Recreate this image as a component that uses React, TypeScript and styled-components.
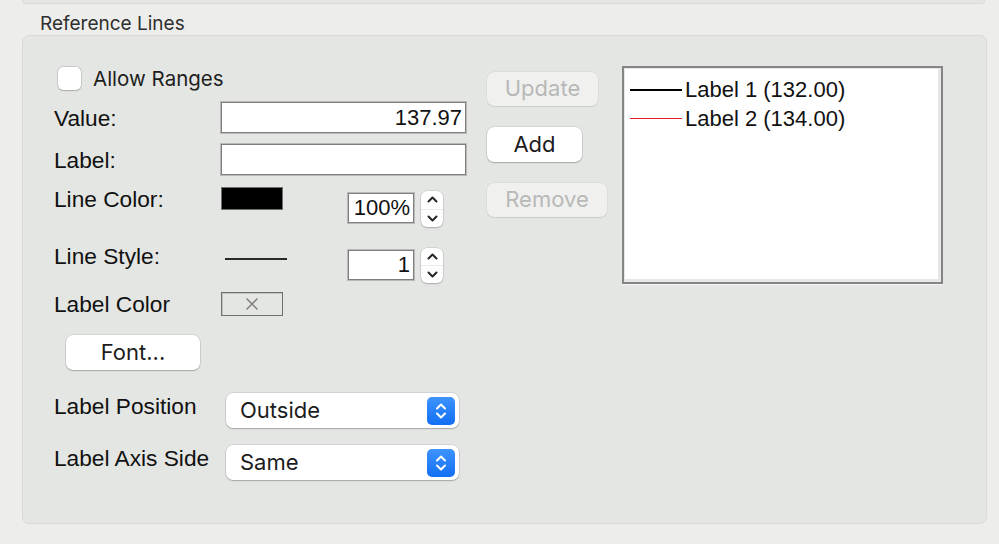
import React from "react";
import styled, { createGlobalStyle } from "styled-components";

const GlobalStyle = createGlobalStyle`
  html, body { margin: 0; padding: 0; background: #edeeeb; }
  body {
    width: 999px; height: 544px; overflow: hidden;
    font-family: "Liberation Sans", Arial, sans-serif;
    -webkit-font-smoothing: antialiased;
  }
  * { box-sizing: border-box; }
`;

const SYS = `Inter, "Noto Sans", sans-serif`;
const HELV = `"Liberation Sans", Arial, sans-serif`;

const Page = styled.div`
  display: flex;
  flex-direction: column;
  width: 999px;
  height: 544px;
`;

const TopStub = styled.div`
  margin-left: 22px;
  width: 963px;
  height: 4px;
  background: #e5e6e3;
  border: 1px solid #d9dbd8;
  border-top: none;
  border-radius: 0 0 6px 6px;
`;

const GroupTitle = styled.div`
  margin: 9px 0 0 40px;
  height: 22px;
  font-family: ${SYS};
  font-size: 19px;
  line-height: 22px;
  color: #2e2e2e;
`;

const Group = styled.section`
  margin: 0 0 0 22px;
  width: 965px;
  height: 489px;
  background: #e4e6e3;
  border: 1px solid #d9dbd8;
  border-radius: 7px;
  display: flex;
  align-items: flex-start;
`;

const LeftForm = styled.div`
  margin-left: 31px;
  width: 412px;
  display: flex;
  flex-direction: column;
`;

const CheckRow = styled.label`
  margin-top: 30px;
  height: 24px;
  padding-left: 4px;
  display: flex;
  align-items: center;
  gap: 12px;
  font-family: ${SYS};
  font-size: 20.5px;
  color: #1e1e1e;
`;

const CheckBox = styled.span`
  width: 23px;
  height: 23px;
  border-radius: 5px;
  background: #ffffff;
  box-shadow: 0 0 0 0.5px rgba(0, 0, 0, 0.18), 0 0.5px 1.5px rgba(0, 0, 0, 0.18);
`;

const Row = styled.div<{ $mt: number; $align?: string }>`
  margin-top: ${(p) => p.$mt}px;
  display: grid;
  grid-template-columns: 167px 127px 73px 45px;
  align-items: ${(p) => p.$align || "start"};
`;

const PopupRowGrid = styled.div<{ $mt: number }>`
  margin-top: ${(p) => p.$mt}px;
  display: grid;
  grid-template-columns: 172px 233px;
  align-items: start;
`;

const FieldLabel = styled.span<{ $mt?: number }>`
  margin-top: ${(p) => p.$mt || 0}px;
  font-family: ${HELV};
  font-size: 22.7px;
  line-height: 24px;
  color: #111;
  white-space: nowrap;
`;

const TextField = styled.div<{ $span?: boolean; $mt?: number; $w?: number; $h?: number }>`
  grid-column: ${(p) => (p.$span ? "2 / -1" : "auto")};
  margin-top: ${(p) => p.$mt || 0}px;
  width: ${(p) => p.$w || 245}px;
  height: ${(p) => p.$h || 31}px;
  background: #fff;
  border: 1px solid #7f7f7f;
  box-shadow: 0 0 0 1px #b9bab8;
  padding: 0 3px;
  font-family: ${HELV};
  font-size: 22px;
  line-height: ${(p) => (p.$h || 31) - 2}px;
  text-align: right;
  color: #111;
`;

const Swatch = styled.div<{ $fill?: string; $h?: number }>`
  width: 62px;
  height: ${(p) => p.$h || 23}px;
  background: ${(p) => p.$fill || "transparent"};
  border: 1px solid #707070;
  box-shadow: inset 1px 1px 0 rgba(0, 0, 0, 0.15);
  display: flex;
  align-items: center;
  justify-content: center;
  color: #777;
`;

const LineSample = styled.div`
  margin: 14px 0 0 4px;
  width: 62px;
  height: 2px;
  background: #2a2a2a;
`;

const StepperBox = styled.div<{ $mt: number; $h: number }>`
  margin-top: ${(p) => p.$mt}px;
  width: 22px;
  height: ${(p) => p.$h}px;
  background: #fff;
  border-radius: 6px;
  box-shadow: 0 0 0 0.5px rgba(0, 0, 0, 0.14), 0 1px 1.5px rgba(0, 0, 0, 0.2);
  display: flex;
  flex-direction: column;
`;

const StepHalf = styled.div<{ $top?: boolean }>`
  flex: 1;
  display: flex;
  align-items: center;
  justify-content: center;
  border-bottom: ${(p) => (p.$top ? "1px solid #ececec" : "none")};
`;

const PushButton = styled.div<{ $mt: number; $w: number; $h: number; $disabled?: boolean }>`
  margin-top: ${(p) => p.$mt}px;
  width: ${(p) => p.$w}px;
  height: ${(p) => p.$h}px;
  padding-bottom: 2px;
  border-radius: 7px;
  background: ${(p) => (p.$disabled ? "#f0f1ef" : "#ffffff")};
  box-shadow: ${(p) =>
    p.$disabled
      ? "0 0 0 0.5px rgba(0,0,0,0.06), 0 0.5px 1px rgba(0,0,0,0.08)"
      : "0 0 0 0.5px rgba(0,0,0,0.14), 0 1px 1.5px rgba(0,0,0,0.22)"};
  display: flex;
  align-items: center;
  justify-content: center;
  font-family: ${SYS};
  font-size: 22px;
  color: ${(p) => (p.$disabled ? "#b8b8b8" : "#1c1c1c")};
`;

const FontButton = styled(PushButton)`
  margin-left: 12px;
`;

const Popup = styled.div`
  width: 233px;
  height: 35px;
  border-radius: 7px;
  background: #fff;
  box-shadow: 0 0 0 0.5px rgba(0, 0, 0, 0.14), 0 1px 1.5px rgba(0, 0, 0, 0.22);
  display: flex;
  align-items: center;
  padding: 0 4px 0 14px;
  font-family: ${SYS};
  font-size: 22px;
  color: #1c1c1c;
`;

const PopupText = styled.span`
  flex: 1;
  margin-top: -2px;
`;

const PopupArrows = styled.span`
  width: 28px;
  height: 28px;
  border-radius: 5px;
  background: linear-gradient(#3e93fd, #116ff3);
  display: flex;
  align-items: center;
  justify-content: center;
`;

const ButtonColumn = styled.div`
  margin-left: 21px;
  width: 120px;
  display: flex;
  flex-direction: column;
  align-items: flex-start;
`;

const ListBox = styled.div`
  margin: 30px 0 0 15px;
  width: 321px;
  height: 218px;
  background: #fff;
  border: 2px solid #858585;
  box-shadow: inset -3px -3px 0 #e7e7e7, inset 1px 1px 0 #e7e7e7, 0 1px 0 #f4f4f4;
  padding: 7px 0 0 6px;
`;

const ListItem = styled.div`
  display: flex;
  align-items: center;
  height: 29px;
  font-family: ${HELV};
  font-size: 22px;
  color: #111;
`;

const ItemLine = styled.span<{ $color: string; $thick: number }>`
  width: 52px;
  height: ${(p) => p.$thick}px;
  background: ${(p) => p.$color};
  margin-right: 3px;
`;

const Chevron = ({ up, color, w = 11, h = 7, sw = 2 }: { up?: boolean; color: string; w?: number; h?: number; sw?: number }) => (
  <svg width={w} height={h} viewBox={`0 0 ${w} ${h}`} fill="none">
    <path
      d={up ? `M1.5 ${h - 1.5} L${w / 2} 1.5 L${w - 1.5} ${h - 1.5}` : `M1.5 1.5 L${w / 2} ${h - 1.5} L${w - 1.5} 1.5`}
      stroke={color}
      strokeWidth={sw}
      strokeLinecap="round"
      strokeLinejoin="round"
    />
  </svg>
);

const Stepper = ({ mt, h }: { mt: number; h: number }) => (
  <StepperBox $mt={mt} $h={h}>
    <StepHalf $top>
      <Chevron up color="#262626" />
    </StepHalf>
    <StepHalf>
      <Chevron color="#262626" />
    </StepHalf>
  </StepperBox>
);

const PopupButton = ({ value }: { value: string }) => (
  <Popup>
    <PopupText>{value}</PopupText>
    <PopupArrows>
      <svg width="14" height="20" viewBox="0 0 14 20" fill="none">
        <path d="M3 7.5 L7 3.5 L11 7.5" stroke="#fff" strokeWidth="2" strokeLinecap="round" strokeLinejoin="round" />
        <path d="M3 12.5 L7 16.5 L11 12.5" stroke="#fff" strokeWidth="2" strokeLinecap="round" strokeLinejoin="round" />
      </svg>
    </PopupArrows>
  </Popup>
);

export default function App() {
  return (
    <Page>
      <GlobalStyle />
      <TopStub />
      <GroupTitle>Reference Lines</GroupTitle>
      <Group>
        <LeftForm>
          <CheckRow>
            <CheckBox />
            Allow Ranges
          </CheckRow>

          <Row $mt={12} $align="center">
            <FieldLabel>Value:</FieldLabel>
            <TextField $span>137.97</TextField>
          </Row>

          <Row $mt={11} $align="center">
            <FieldLabel>Label:</FieldLabel>
            <TextField $span />
          </Row>

          <Row $mt={12}>
            <FieldLabel>Line Color:</FieldLabel>
            <Swatch $fill="#000" />
            <TextField $mt={6} $w={66} $h={30}>100%</TextField>
            <Stepper mt={4} h={36} />
          </Row>

          <Row $mt={17}>
            <FieldLabel>Line Style:</FieldLabel>
            <LineSample />
            <TextField $mt={6} $w={66} $h={30}>1</TextField>
            <Stepper mt={4} h={35} />
          </Row>

          <Row $mt={9} $align="center">
            <FieldLabel>Label Color</FieldLabel>
            <Swatch $h={24}>
              <svg width="14" height="14" viewBox="0 0 14 14">
                <path d="M1.5 1.5 L12.5 12.5 M12.5 1.5 L1.5 12.5" stroke="#7a7a7a" strokeWidth="1.3" />
              </svg>
            </Swatch>
          </Row>

          <FontButton $mt={19} $w={134} $h={35}>
            Font...
          </FontButton>

          <PopupRowGrid $mt={23}>
            <FieldLabel $mt={1}>Label Position</FieldLabel>
            <PopupButton value="Outside" />
          </PopupRowGrid>

          <PopupRowGrid $mt={17}>
            <FieldLabel $mt={1}>Label Axis Side</FieldLabel>
            <PopupButton value="Same" />
          </PopupRowGrid>
        </LeftForm>

        <ButtonColumn>
          <PushButton $mt={36} $w={111} $h={34} $disabled>
            Update
          </PushButton>
          <PushButton $mt={21} $w={95} $h={35}>
            Add
          </PushButton>
          <PushButton $mt={21} $w={120} $h={34} $disabled>
            Remove
          </PushButton>
        </ButtonColumn>

        <ListBox>
          <ListItem>
            <ItemLine $color="#000" $thick={2} />
            Label 1 (132.00)
          </ListItem>
          <ListItem>
            <ItemLine $color="#e3202c" $thick={1} />
            Label 2 (134.00)
          </ListItem>
        </ListBox>
      </Group>
    </Page>
  );
}
